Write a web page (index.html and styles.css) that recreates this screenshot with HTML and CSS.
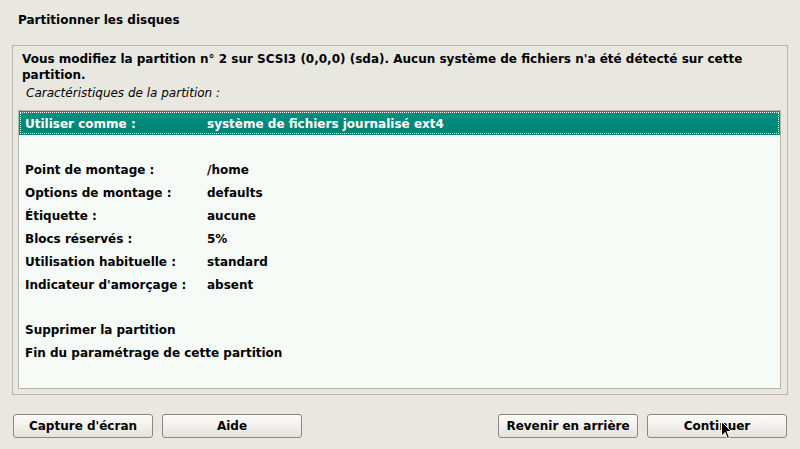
FILE: index.html
```html
<!DOCTYPE html>
<html lang="fr">
<head>
<meta charset="utf-8">
<title>Partitionner les disques</title>
<link rel="stylesheet" href="styles.css">
</head>
<body>
<div class="screen">
  <h1 class="title">Partitionner les disques</h1>
  <div class="frame">
    <p class="intro">Vous modifiez la partition n° 2 sur SCSI3 (0,0,0) (sda). Aucun système de fichiers n'a été détecté sur cette partition.</p>
    <p class="subtitle">Caractéristiques de la partition :</p>
    <div class="list">
      <div class="row selected"><span class="key">Utiliser comme :</span><span class="val">système de fichiers journalisé ext4</span></div>
      <div class="row"></div>
      <div class="row"><span class="key">Point de montage :</span><span class="val">/home</span></div>
      <div class="row"><span class="key">Options de montage :</span><span class="val">defaults</span></div>
      <div class="row"><span class="key">Étiquette :</span><span class="val">aucune</span></div>
      <div class="row"><span class="key">Blocs réservés :</span><span class="val">5%</span></div>
      <div class="row"><span class="key">Utilisation habituelle :</span><span class="val">standard</span></div>
      <div class="row"><span class="key">Indicateur d'amorçage :</span><span class="val">absent</span></div>
      <div class="row"></div>
      <div class="row"><span class="key">Supprimer la partition</span></div>
      <div class="row"><span class="key">Fin du paramétrage de cette partition</span></div>
    </div>
  </div>
  <div class="buttons">
    <div class="group">
      <button class="btn">Capture d'écran</button>
      <button class="btn">Aide</button>
    </div>
    <div class="group">
      <button class="btn">Revenir en arrière</button>
      <button class="btn">Continuer</button>
    </div>
  </div>
  <svg class="cursor" width="12" height="19" viewBox="0 0 12 19"><path d="M0.5 0.5 L0.5 15 L4 11.5 L6.5 17.5 L8.5 16.5 L6 10.5 L10.5 10.5 Z" fill="#000" stroke="#fff" stroke-width="1"/></svg>
</div>
</body>
</html>
```
FILE: styles.css
```css
* { box-sizing: border-box; }
html, body {
  margin: 0;
  padding: 0;
  background: #e8e7e0;
}
.screen {
  position: relative;
  width: 800px;
  height: 449px;
  padding: 0 12px 0 12px;
  font-family: "DejaVu Sans", sans-serif;
  font-size: 12px;
  color: #000;
  display: flex;
  flex-direction: column;
}
.title {
  margin: 0;
  padding: 12px 0 0 6px;
  height: 45px;
  font-size: 12px;
  font-weight: bold;
  line-height: 16px;
}
.frame {
  width: 776px;
  height: 350px;
  border: 1px solid #b9b5aa;
  padding: 5px 5px 5px 5px;
  display: flex;
  flex-direction: column;
}
.intro {
  margin: 0 0 0 4px;
  font-weight: bold;
  line-height: 16px;
}
.subtitle {
  margin: 2px 0 0 8px;
  font-style: italic;
  font-size: 12px;
  line-height: 16px;
  height: 25px;
}
.list {
  width: 763px;
  height: 281px;
  border: 1px solid #b9b5aa;
  background: #f6fbf7;
  padding: 0;
}
.row {
  height: 22.9px;
  display: flex;
  align-items: center;
  padding-top: 2px;
  padding-left: 6px;
  font-weight: bold;
  white-space: nowrap;
}
.row.selected {
  height: 24px;
  background: linear-gradient(#009080, #008272);
  color: #fff;
  outline: 1px dotted #ffffff;
  outline-offset: -2px;
}
.key {
  width: 182px;
}
.buttons {
  display: flex;
  justify-content: space-between;
  padding: 19px 1px 0 1px;
}
.group {
  display: flex;
  gap: 9px;
}
.btn {
  width: 140px;
  height: 24px;
  border: 1px solid #8b877e;
  border-radius: 3px;
  background: linear-gradient(#fbfbf9, #efeee9 60%, #e3e1da);
  font-family: "DejaVu Sans", sans-serif;
  font-weight: bold;
  font-size: 12px;
  color: #000;
  padding: 0;
}
.cursor {
  position: absolute;
  left: 721px;
  top: 421px;
}
```
